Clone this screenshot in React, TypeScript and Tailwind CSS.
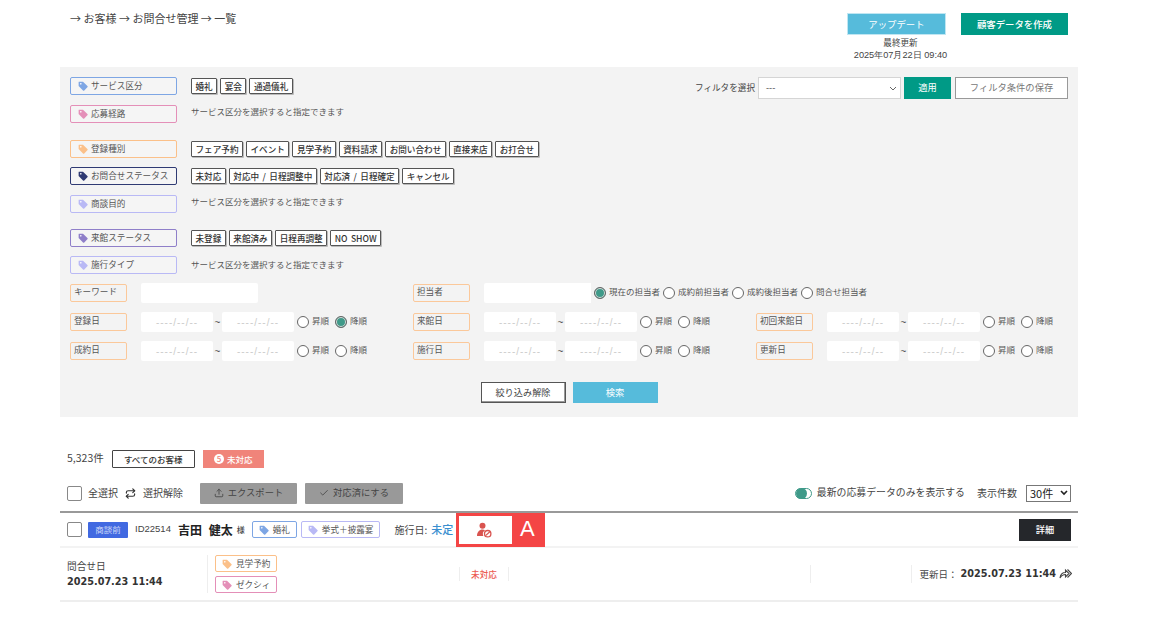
import React from 'react';
import { Check, Repeat, Upload } from 'lucide-react';

const TagIcon = ({ color, size = 10 }: { color: string; size?: number }) => (
  <svg width={size} height={size} viewBox="0 0 16 16" className="shrink-0">
    <path d="M1 1.5 A.5.5 0 0 1 1.5 1 H8 L15 8 A1.4 1.4 0 0 1 15 10 L10 15 A1.4 1.4 0 0 1 8 15 L1 8 Z" fill={color} />
    <circle cx="4.5" cy="4.5" r="1.3" fill="#fff" />
  </svg>
);

const FilterLabel = ({ label, color }: { label: string; color: string }) => (
  <div className="flex h-[18px] w-[107px] shrink-0 items-center gap-[3px] rounded-[2px] border bg-[#f5f5f5] pl-[7px] text-[8.6px] whitespace-nowrap text-[#555]" style={{ borderColor: color }}>
    <TagIcon color={color} />
    <span className="pb-[1px]">{label}</span>
  </div>
);

const Chips = ({ items }: { items: string[] }) => (
  <div className="flex gap-[3px]">
    {items.map((c) => (
      <span key={c} className="flex h-4 items-center rounded-[1px] border border-[#555] bg-white px-[3.5px] text-[8.6px] leading-none font-medium whitespace-nowrap text-[#333] shadow-[1px_1px_0_#bbb] [word-spacing:1.5px]">{c}</span>
    ))}
  </div>
);

const Hint = ({ className = '-mt-[2px]' }: { className?: string }) => (
  <p className={`self-start text-[8.5px] leading-4 whitespace-nowrap text-[#555] ${className}`}>サービス区分を選択すると指定できます</p>
);

const Radio = ({ label, on = false, className = '' }: { label: string; on?: boolean; className?: string }) => (
  <span className={`flex items-center gap-[3px] text-[8.5px] whitespace-nowrap text-[#555] ${className}`}>
    <span className={`h-3 w-3 shrink-0 rounded-full border border-[#666] ${on ? 'bg-[#3f9a89] shadow-[inset_0_0_0_1px_#ddd]' : 'bg-white'}`} />
    <span className="pb-[3px]">{label}</span>
  </span>
);

const DateInput = () => (
  <span className="flex h-5 w-[72px] items-center justify-center rounded-[2px] bg-white font-['Liberation_Sans'] text-[10px] tracking-[1px] text-[#ccc]">----/--/--</span>
);

const FieldLabel = ({ label }: { label: string }) => (
  <span className="flex h-[18px] w-[57px] shrink-0 items-center rounded-[2px] border border-[#fbc89a] pb-[3px] pl-[3px] text-[8.6px] whitespace-nowrap text-[#555]">{label}</span>
);

const DateField = ({ label, desc = false, width = 'w-[343px]' }: { label: string; desc?: boolean; width?: string }) => (
  <div className={`flex items-center ${width}`}>
    <FieldLabel label={label} />
    <span className="ml-[14px]"><DateInput /></span>
    <span className="w-[9px] text-center font-['Liberation_Sans'] text-[10px] text-[#555]">~</span>
    <DateInput />
    <Radio label="昇順" className="ml-[3px]" />
    <Radio label="降順" on={desc} className="ml-[6px]" />
  </div>
);

const RowTag = ({ label, color, className = '' }: { label: string; color: string; className?: string }) => (
  <span className={`flex h-[17px] items-center gap-1 rounded-[2px] border px-[6px] text-[8.6px] whitespace-nowrap text-[#555] ${className}`} style={{ borderColor: color }}>
    <TagIcon color={color} />
    {label}
  </span>
);

const UserBan = () => (
  <svg width="16" height="16" viewBox="0 0 16 16">
    <circle cx="6.5" cy="3.7" r="3" fill="#d9534f" />
    <path d="M1 14 C1 10 3.5 7.5 6.5 7.5 C7.5 7.5 8.3 7.8 9 8.2 A4.6 4.6 0 0 0 7.4 14 Z" fill="#d9534f" />
    <circle cx="11.7" cy="11.7" r="3.2" fill="#fff" stroke="#d9534f" strokeWidth="1.3" />
    <path d="M9.6 13.6 L13.8 9.8" stroke="#d9534f" strokeWidth="1.2" />
  </svg>
);

const ShareIcon = () => (
  <svg width="13" height="11" viewBox="0 0 13 11" fill="none" stroke="#444" strokeWidth="1.1">
    <path d="M1 10 C1.5 6 3.5 4.5 6.5 4.5 V2 L10 5.5 L6.5 9 V6.5 C4.5 6.5 2.5 7.5 1 10 Z" />
    <path d="M8.5 1.5 L12.5 5.5 L8.5 9.5" />
  </svg>
);

const GrayButton = ({ icon, label, width }: { icon: React.ReactNode; label: string; width: string }) => (
  <button className={`flex h-[21px] items-center justify-center gap-1 rounded-[1px] bg-[#999] text-[9.3px] text-[#444] ${width}`}>
    {icon}
    {label}
  </button>
);

const Checkbox = () => <span className="h-[15px] w-[15px] shrink-0 rounded-[2px] border border-[#888] bg-white" />;

export default function App() {
  return (
    <div className="h-[622px] overflow-hidden bg-white font-['Noto_Sans_CJK_JP','Noto_Sans',sans-serif] text-[#444]">
      {/* Header */}
      <div className="flex h-[67px] justify-between pr-[87px] pl-[70px]">
        <p className="pt-[10px] text-[11px] leading-4 text-[#444]">→ お客様 → お問合せ管理 → 一覧</p>
        <div className="flex flex-col pt-[13px]">
          <div className="flex gap-[15px]">
            <button className="h-[22px] w-[99px] border border-[#bfe6f2] bg-[#56bbdb] text-[9.4px] text-white">アップデート</button>
            <button className="h-[22px] w-[107px] bg-[#009a86] text-[9.4px] font-medium text-white">顧客データを作成</button>
          </div>
          <div className="ml-[4px] w-[99px] text-center text-[8.6px] leading-[13px] whitespace-nowrap text-[#444]">
            <p className="mt-[1px]">最終更新</p>
            <p className="-mx-2 font-['Liberation_Sans'] text-[9.2px]">2025年07月22日 09:40</p>
          </div>
        </div>
      </div>

      {/* Filter panel */}
      <div className="ml-[60px] h-[350px] w-[1018px] bg-[#f3f3f3] pt-[10px] pr-[10px] pl-[10px]">
        <div className="flex justify-between">
          <div className="flex flex-col">
            <div className="flex items-center gap-[14px]"><FilterLabel label="サービス区分" color="#7ea6e4" /><Chips items={['婚礼', '宴会', '通過儀礼']} /></div>
            <div className="mt-[10px] flex gap-[14px]"><FilterLabel label="応募経路" color="#e48fb8" /><Hint /></div>
            <div className="mt-[17px] flex items-center gap-[14px]"><FilterLabel label="登録種別" color="#fbc089" /><Chips items={['フェア予約', 'イベント', '見学予約', '資料請求', 'お問い合わせ', '直接来店', 'お打合せ']} /></div>
            <div className="mt-[9px] flex items-center gap-[14px]"><FilterLabel label="お問合せステータス" color="#2f3a73" /><Chips items={['未対応', '対応中 / 日程調整中', '対応済 / 日程確定', 'キャンセル']} /></div>
            <div className="mt-[10px] flex gap-[14px]"><FilterLabel label="商談目的" color="#b9b9f5" /><Hint /></div>
            <div className="mt-[16px] flex items-center gap-[14px]"><FilterLabel label="来館ステータス" color="#8f7fc9" /><Chips items={['未登録', '来館済み', '日程再調整', 'NO SHOW']} /></div>
            <div className="mt-[9px] flex gap-[14px]"><FilterLabel label="施行タイプ" color="#b9b9f5" /><Hint className="mt-0" /></div>
          </div>
          <div className="flex h-[22px] items-center">
            <span className="mr-[3px] pb-[2px] text-[8.6px] whitespace-nowrap text-[#444]">フィルタを選択</span>
            <span className="flex h-[22px] w-[143px] items-center justify-between border border-[#d5d5d5] bg-white pr-[3px] pl-[7px] text-[9px]">
              <span>---</span>
              <svg width="8" height="5" viewBox="0 0 8 5" fill="none" stroke="#666"><path d="M1 1 L4 4 L7 1" /></svg>
            </span>
            <button className="ml-[3px] h-[22px] w-[47px] bg-[#009a86] text-[9.3px] text-white">適用</button>
            <button className="ml-[4px] h-[22px] w-[113px] border border-[#999] bg-white text-[9.3px] text-[#777]">フィルタ条件の保存</button>
          </div>
        </div>

        <div className="mt-[9px] flex items-center">
          <div className="flex w-[343px] items-center">
            <FieldLabel label="キーワード" />
            <span className="ml-[14px] h-5 w-[117px] rounded-[2px] bg-white" />
          </div>
          <FieldLabel label="担当者" />
          <span className="ml-[14px] h-5 w-[107px] rounded-l-[2px] bg-white" />
          <Radio label="現在の担当者" on className="ml-[3px]" />
          <Radio label="成約前担当者" className="ml-[3px]" />
          <Radio label="成約後担当者" className="ml-[3px]" />
          <Radio label="問合せ担当者" className="ml-[3px]" />
        </div>
        <div className="mt-[9px] flex items-center">
          <DateField label="登録日" desc />
          <DateField label="来館日" />
          <DateField label="初回来館日" width="" />
        </div>
        <div className="mt-[9px] flex items-center">
          <DateField label="成約日" />
          <DateField label="施行日" />
          <DateField label="更新日" width="" />
        </div>
        <div className="mt-[21px] flex justify-center gap-[7px]">
          <button className="h-[21px] w-[85px] border border-[#555] bg-white text-[9.2px] text-[#444] shadow-[inset_-1px_-1px_0_#999]">絞り込み解除</button>
          <button className="h-[21px] w-[85px] bg-[#56bbdb] text-[9.3px] text-white">検索</button>
        </div>
      </div>

      {/* Result toolbar */}
      <div className="ml-[60px] w-[1018px]">
        <div className="mt-[33px] flex items-center pl-[7px]">
          <span className="pb-[2px] text-[10.5px]">5,323件</span>
          <button className="ml-[8px] h-[18px] w-[83px] rounded-[1px] border border-[#444] bg-white text-[8.5px] font-medium text-[#333]">すべてのお客様</button>
          <span className="ml-[8px] flex h-[18px] w-[61px] items-center justify-center gap-[3px] bg-[#f0847a] text-[8.5px] font-medium text-white">
            <span className="flex h-[10px] w-[10px] items-center justify-center rounded-full bg-white text-[8px] leading-none text-[#f0847a]">5</span>
            未対応
          </span>
        </div>
        <div className="mt-[14px] flex h-[22px] items-center pr-[7px] pl-[7px]">
          <Checkbox />
          <span className="ml-[6px] pb-[2px] text-[10px]">全選択</span>
          <Repeat size={11} strokeWidth={2.6} className="ml-[7px] text-[#333]" />
          <span className="ml-[7px] pb-[2px] text-[10px]">選択解除</span>
          <span className="ml-[17px]">
            <GrayButton icon={<Upload size={10} />} label="エクスポート" width="w-[97px]" />
          </span>
          <span className="ml-[8px]">
            <GrayButton icon={<Check size={10} />} label="対応済にする" width="w-[98px]" />
          </span>
          <span className="ml-auto flex h-[11px] w-[17px] items-center rounded-full border border-[#3f9a89] bg-white">
            <span className="h-[11px] w-[11px] rounded-full bg-[#3f9a89]" />
          </span>
          <span className="ml-[5px] pb-[2px] text-[9.9px]">最新の応募データのみを表示する</span>
          <span className="ml-[12px] pb-[2px] text-[10px]">表示件数</span>
          <span className="ml-[9px] flex h-[17px] w-[45px] items-center justify-between border border-[#777] pr-[2px] pl-[3px] text-[11px] text-[#222]">
            30件
            <svg width="8" height="6" viewBox="0 0 8 6" fill="none" stroke="#222" strokeWidth="1.6"><path d="M1 1 L4 4 L7 1" /></svg>
          </span>
        </div>

        {/* Customer row */}
        <div className="mt-[7px] flex h-[37px] items-center border-t-2 border-b-2 border-t-[#999] border-b-[#f3f3f3] pr-[7px] pl-[7px]">
          <Checkbox />
          <span className="ml-[6px] flex h-[16px] w-[40px] items-center justify-center rounded-[1px] bg-[#4169e1] text-[8.5px] text-[#cdd8f8]">商談前</span>
          <span className="ml-[7px] font-['Liberation_Sans'] text-[9.5px]">ID22514</span>
          <span className="ml-[7px] text-[12px] font-bold whitespace-nowrap text-[#222] [word-spacing:4px]">吉田 健太</span>
          <span className="ml-[4px] text-[8px] font-medium">様</span>
          <RowTag label="婚礼" color="#7ea6e4" className="ml-[7px]" />
          <RowTag label="挙式＋披露宴" color="#b9b9f5" className="ml-[4px]" />
          <span className="ml-[14px] text-[10px] whitespace-nowrap">施行日:</span>
          <span className="ml-[4px] text-[11px] font-medium whitespace-nowrap text-[#3a8fd0]">未定</span>
          <div className="ml-[3px] flex h-[34px] w-[89px] shrink-0 self-start border-[3px] border-[#f44545] bg-[#f44545]">
            <span className="flex w-[53px] items-center justify-center bg-white pr-[3px]"><UserBan /></span>
            <span className="flex-1 text-center font-['Liberation_Sans'] text-[22px] leading-[26px] text-white">A</span>
          </div>
          <button className="ml-auto h-[22px] w-[52px] bg-[#25272b] text-[9.2px] font-medium text-white">詳細</button>
        </div>

        {/* Detail row */}
        <div className="flex h-[54px] items-center border-b-2 border-b-[#eeeeee] pr-[6px] pl-[7px]">
          <div className="w-[140px] shrink-0">
            <p className="text-[9.7px] leading-[15px]">問合せ日</p>
            <p className="font-['DejaVu_Sans'] text-[9.7px] leading-[15px] font-bold whitespace-nowrap text-[#333]">2025.07.23 11:44</p>
          </div>
          <div className="flex h-[38px] w-[252px] shrink-0 flex-col justify-between border-l border-l-[#eee] pl-[7px]">
            <RowTag label="見学予約" color="#fbc089" className="w-[62px]" />
            <RowTag label="ゼクシィ" color="#e48fb8" className="w-[62px]" />
          </div>
          <div className="flex h-[14px] w-[50px] shrink-0 items-center justify-center border-x border-x-[#eee] text-[8.6px] font-medium text-[#ec5a50]">未対応</div>
          <div className="ml-[301px] h-[18px] w-[102px] shrink-0 border-x border-x-[#eee]" />
          <div className="flex flex-1 items-center justify-end whitespace-nowrap">
            <span className="text-[9.5px]">更新日：</span>
            <span className="ml-[3px] font-['DejaVu_Sans'] text-[9.7px] font-bold text-[#333]">2025.07.23 11:44</span>
            <span className="ml-[3px]"><ShareIcon /></span>
          </div>
        </div>
      </div>
    </div>
  );
}
